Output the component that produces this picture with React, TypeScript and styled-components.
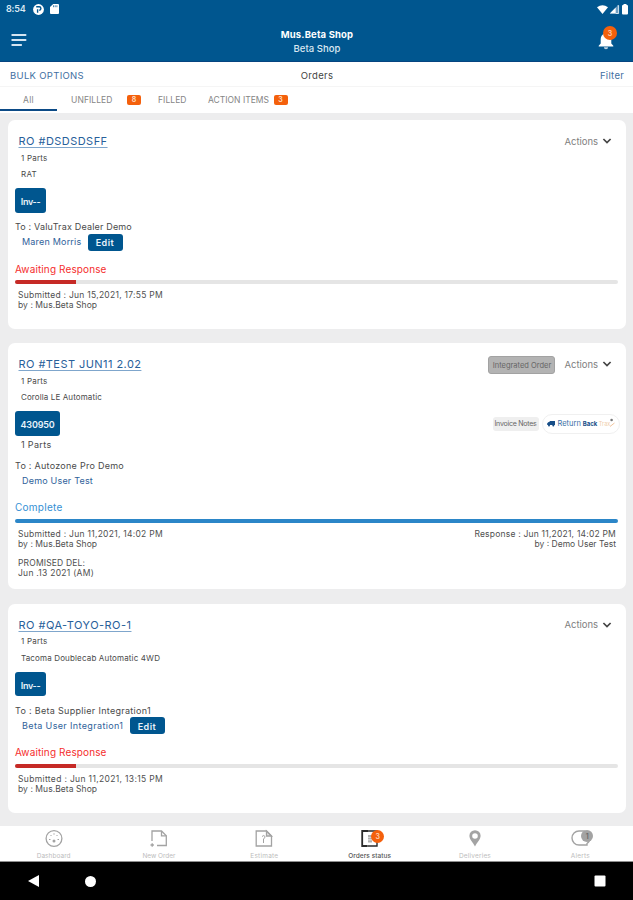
import React from 'react';
import styled, { createGlobalStyle, css } from 'styled-components';

const GlobalStyle = createGlobalStyle`
  *, *::before, *::after { box-sizing: border-box; }
  html, body { margin: 0; padding: 0; background: #ededee; }
  body { font-family: Inter, "Liberation Sans", sans-serif; overflow: hidden; }
`;

const brand = '#00568f';
const orange = '#f4600c';

const tracking = css<{ $ls?: number }>`
  letter-spacing: ${({ $ls = 0 }) => $ls}px;
  white-space: nowrap;
`;

const Screen = styled.div`
  width: 633px;
  height: 900px;
  display: flex;
  flex-direction: column;
  background: #ededee;
  overflow: hidden;
`;

const Header = styled.header`
  height: 62px;
  flex: none;
  background: ${brand};
  border-bottom: 1px solid #064480;
  color: #fff;
`;

const StatusBar = styled.div`
  height: 18px;
  display: flex;
  align-items: center;
  padding: 0 4px 0 6px;
`;

const Clock = styled.span`
  ${tracking}
  width: 28px;
  font-size: 9px;
  font-weight: 600;
  line-height: 18px;
  color: #d9e8f3;
`;

const StatusIcons = styled.div<{ $end?: boolean }>`
  display: flex;
  align-items: center;
  gap: ${({ $end }) => ($end ? 1 : 6)}px;
  margin-left: ${({ $end }) => ($end ? 'auto' : '-1px')};
  svg { display: block; }
`;

const TitleBar = styled.div`
  height: 43px;
  display: grid;
  grid-template-columns: 100px 1fr 100px;
  align-items: center;
  padding: 0 18px 0 11px;
  svg { display: block; }
`;

const Titles = styled.div`
  display: flex;
  flex-direction: column;
  align-items: center;
  padding: 4px 0 0 8px;
`;

const ShopName = styled.h1`
  ${tracking}
  margin: 0;
  font-size: 9.5px;
  font-weight: 700;
  line-height: 14px;
`;

const BranchName = styled.div`
  ${tracking}
  font-size: 9.5px;
  font-weight: 500;
  line-height: 14px;
  color: #dbe8f2;
`;

const BellButton = styled.div`
  position: relative;
  justify-self: end;
  width: 17px;
  height: 21px;
`;

const CountBubble = styled.span<{ $muted?: boolean; $top: number; $left: number; $size: number }>`
  position: absolute;
  top: ${({ $top }) => $top}px;
  left: ${({ $left }) => $left}px;
  width: ${({ $size }) => $size}px;
  height: ${({ $size }) => $size}px;
  border-radius: 50%;
  display: flex;
  align-items: center;
  justify-content: center;
  background: ${({ $muted }) => ($muted ? '#a3a3a3' : orange)};
  color: ${({ $muted }) => ($muted ? '#686868' : '#ffd3b5')};
  font-size: 7px;
  font-weight: 600;
  line-height: 1;
`;

const OptionsBar = styled.div`
  height: 25px;
  flex: none;
  display: grid;
  grid-template-columns: 1fr auto 1fr;
  align-items: center;
  padding: 4px 9px 0 10px;
  background: #fff;
  border-bottom: 1px solid #f5f5f5;
`;

const Option = styled.span<{ $kind?: 'link' | 'title' | 'end'; $ls?: number }>`
  ${tracking}
  font-size: 9.5px;
  line-height: 14px;
  color: ${({ $kind }) => ($kind === 'title' ? '#444' : '#3f70a2')};
  justify-self: ${({ $kind }) => ($kind === 'end' ? 'end' : 'start')};
`;

const Tabs = styled.nav`
  height: 26px;
  flex: none;
  display: flex;
  background: #fff;
`;

const Spacer = styled.span<{ $width: number }>`
  width: ${({ $width }) => $width}px;
`;

const Tab = styled.div<{ $width: number; $active?: boolean; $ls?: number }>`
  ${tracking}
  width: ${({ $width }) => $width}px;
  height: 24px;
  display: flex;
  align-items: center;
  justify-content: ${({ $active }) => ($active ? 'center' : 'flex-start')};
  border-bottom: 2px solid ${({ $active }) => ($active ? '#0b4a86' : 'transparent')};
  padding-top: 4px;
  font-size: 8.5px;
  color: #858585;
`;

const TabCount = styled.span`
  width: 14px;
  height: 10px;
  margin-left: auto;
  border-radius: 2px;
  background: ${orange};
  color: #ffe0cb;
  font-size: 7px;
  font-weight: 600;
  line-height: 10px;
  text-align: center;
  letter-spacing: 0;
`;

const Orders = styled.main`
  flex: 1;
  min-height: 0;
  display: flex;
  flex-direction: column;
  gap: 14.5px;
  padding: 7px 7px 0 8px;
`;

const Card = styled.article<{ $height: number }>`
  height: ${({ $height }) => $height}px;
  flex: none;
  display: flex;
  flex-direction: column;
  padding: 13.5px 8px 0 7px;
  border-radius: 7px;
  background: #fff;
`;

const CardRow = styled.div<{ $height: number; $indent?: number; $top?: number }>`
  height: ${({ $height }) => $height}px;
  margin-top: ${({ $top = 0 }) => $top}px;
  padding-left: ${({ $indent = 0 }) => $indent}px;
  flex: none;
  display: flex;
  align-items: center;
`;

const OrderLink = styled.a`
  ${tracking}
  font-size: 11px;
  line-height: 15px;
  color: #28609a;
  text-decoration: underline;
  text-decoration-color: #7fa6cc;
  text-underline-offset: 2px;
`;

const Detail = styled.span<{ $size?: number; $ls?: number }>`
  ${tracking}
  font-size: ${({ $size = 8 }) => $size}px;
  line-height: 12px;
  color: #4a4a4a;
`;

const Person = styled.span`
  ${tracking}
  font-size: 9px;
  line-height: 12px;
  color: #2f629a;
`;

const InvoiceButton = styled.button<{ $width: number; $ls?: number }>`
  ${tracking}
  width: ${({ $width }) => $width}px;
  height: 24.5px;
  padding: 2px 0 0;
  border: 0;
  border-radius: 3px;
  background: ${brand};
  color: #e8f2fa;
  font: 600 9px Inter, sans-serif;
`;

const EditButton = styled.button`
  ${tracking}
  width: 35px;
  height: 17px;
  margin-left: 7px;
  padding: 1px 2px 0 0;
  border: 0;
  border-radius: 3px;
  background: ${brand};
  color: #e8f2fa;
  font: 600 9px Inter, sans-serif;
`;

const RowEnd = styled.div<{ $gap: number; $right?: number }>`
  margin-left: auto;
  margin-right: ${({ $right = 0 }) => $right}px;
  display: flex;
  align-items: center;
  gap: ${({ $gap }) => $gap}px;
`;

const ActionsButton = styled.div`
  ${tracking}
  display: flex;
  align-items: center;
  gap: 4px;
  font-size: 9.5px;
  line-height: 14px;
  color: #808080;
  svg { display: block; }
`;

const IntegratedTag = styled.span`
  ${tracking}
  width: 67px;
  height: 18px;
  border: 1px solid #a2a2a2;
  border-radius: 3px;
  background: #b3b3b3;
  color: #666;
  font-size: 7.5px;
  line-height: 18px;
  text-align: center;
`;

const NotesTag = styled.span`
  ${tracking}
  width: 46px;
  height: 14px;
  border-radius: 3px;
  background: #efefef;
  color: #666;
  font-size: 7px;
  line-height: 14px;
  text-align: center;
`;

const ReturnPill = styled.span`
  width: 78px;
  height: 20px;
  display: flex;
  align-items: center;
  padding-left: 4px;
  border: 1px solid #f0f0f0;
  border-radius: 10px;
  background: #fff;
  svg { display: block; flex: none; }
`;

const ReturnWord = styled.span<{ $tone: 'blue' | 'bold' | 'gold' }>`
  margin-left: ${({ $tone }) => ({ blue: 3, bold: 2, gold: 1.5 })[$tone]}px;
  color: ${({ $tone }) => ({ blue: '#3a70a8', bold: '#174e88', gold: '#f0cda8' })[$tone]};
  font-size: ${({ $tone }) => ({ blue: 7.5, bold: 6, gold: 5.5 })[$tone]}px;
  font-weight: ${({ $tone }) => ($tone === 'bold' ? 700 : 400)};
  line-height: 12px;
`;

const Status = styled.div<{ $done?: boolean; $ls?: number }>`
  ${tracking}
  height: 15px;
  margin-top: 11px;
  flex: none;
  font-size: 10px;
  line-height: 15px;
  color: ${({ $done }) => ($done ? '#3590d4' : '#f52d2d')};
`;

const Track = styled.div`
  height: 4px;
  margin-top: 3.5px;
  flex: none;
  border-radius: 2px;
  background: #e5e5e5;
  overflow: hidden;
`;

const Progress = styled.div<{ $done?: boolean }>`
  width: ${({ $done }) => ($done ? '100%' : '61px')};
  height: 4px;
  background: ${({ $done }) => ($done ? '#2b86c8' : '#c62a26')};
`;

const Stamps = styled.div`
  display: flex;
  justify-content: space-between;
  margin-top: 6px;
  padding: 0 2px 0 3px;
`;

const Stamp = styled.div<{ $end?: boolean }>`
  display: flex;
  flex-direction: column;
  align-items: ${({ $end }) => ($end ? 'flex-end' : 'flex-start')};
`;

const StampLine = styled.span<{ $ls?: number; $gapAbove?: boolean }>`
  ${tracking}
  margin-top: ${({ $gapAbove }) => ($gapAbove ? 8.5 : 0)}px;
  font-size: 8.5px;
  line-height: 10.4px;
  color: #4f4f4f;
`;

const BottomNav = styled.nav`
  height: 36px;
  flex: none;
  display: grid;
  grid-template-columns: repeat(6, 1fr);
  padding-left: 1px;
  background: #fff;
  border-bottom: 1px solid #8f8f8f;
`;

const NavItem = styled.div<{ $active?: boolean }>`
  display: flex;
  flex-direction: column;
  align-items: center;
  padding-top: 3px;
  color: ${({ $active }) => ($active ? '#2b2b2b' : '#a3a3a3')};
`;

const NavIcon = styled.div`
  position: relative;
  width: 20px;
  height: 20px;
  svg { display: block; }
`;

const NavLabel = styled.span<{ $active?: boolean; $ls?: number }>`
  ${tracking}
  margin-top: 3px;
  font-size: 6.5px;
  font-weight: ${({ $active }) => ($active ? 500 : 400)};
  line-height: 9px;
  color: ${({ $active }) => ($active ? '#555' : '#bdbdbd')};
`;

const SystemBar = styled.footer`
  height: 38px;
  flex: none;
  display: flex;
  align-items: center;
  padding: 0 27px 0 28px;
  background: #000;
  svg { display: block; }
`;

const BackKey = styled.svg`margin-right: 45px;`;
const RecentKey = styled.svg`margin-left: auto;`;

const Actions = () => (
  <ActionsButton $ls={-0.03}>
    <span>Actions</span>
    <svg width="10" height="7" viewBox="0 0 10 7" fill="none" stroke="#444" strokeWidth="1.7">
      <path d="M1.4 1 5 4.600 8.600 1" />
    </svg>
  </ActionsButton>
);

type Order = {
  height: number;
  ro: [string, number];
  vehicle: [string, number];
  invoice: [string, number, number];
  supplier: [string, number];
  person: [string, number];
  submitted: [string, number];
  complete?: boolean;
};

const orders: Order[] = [
  {
    height: 208.5,
    ro: ['RO #DSDSDSFF', 0.46],
    vehicle: ['RAT', 0.28],
    invoice: ['Inv--', 31, -0.33],
    supplier: ['To : ValuTrax Dealer Demo', 0.18],
    person: ['Maren Morris', 0.2],
    submitted: ['Submitted : Jun 15,2021, 17:55 PM', 0.26],
  },
  {
    height: 246,
    ro: ['RO #TEST JUN11 2.02', 0.44],
    vehicle: ['Corolla LE Automatic', 0.11],
    invoice: ['430950', 45, -0.17],
    supplier: ['To : Autozone Pro Demo', 0.27],
    person: ['Demo User Test', 0.2],
    submitted: ['Submitted : Jun 11,2021, 14:02 PM', 0.27],
    complete: true,
  },
  {
    height: 209,
    ro: ['RO #QA-TOYO-RO-1', 0.47],
    vehicle: ['Tacoma Doublecab Automatic 4WD', 0.15],
    invoice: ['Inv--', 31, -0.33],
    supplier: ['To : Beta Supplier Integration1', 0.31],
    person: ['Beta User Integration1', 0.37],
    submitted: ['Submitted : Jun 11,2021, 13:15 PM', 0.34],
  },
];

const OrderCard = ({ order }: { order: Order }) => (
  <Card $height={order.height}>
    <CardRow $height={16} $indent={3.5}>
      <OrderLink $ls={order.ro[1]}>{order.ro[0]}</OrderLink>
      <RowEnd $gap={9} $right={6}>
        {order.complete && <IntegratedTag $ls={0}>Integrated Order</IntegratedTag>}
        <Actions />
      </RowEnd>
    </CardRow>
    <CardRow $height={12} $top={2} $indent={6}>
      <Detail $ls={0.21}>1 Parts</Detail>
    </CardRow>
    <CardRow $height={12} $top={4.5} $indent={6}>
      <Detail $ls={order.vehicle[1]}>{order.vehicle[0]}</Detail>
    </CardRow>
    <CardRow $height={25} $top={8}>
      <InvoiceButton $width={order.invoice[1]} $ls={order.invoice[2]}>{order.invoice[0]}</InvoiceButton>
      {order.complete && (
        <RowEnd $gap={3} $right={-1.5}>
          <NotesTag $ls={-0.24}>Invoice Notes</NotesTag>
          <ReturnPill>
            <svg width="8" height="7" viewBox="0 0 8 7" fill="#174e88">
              <path d="M2.600 1H8v4H.2V3.200L1.600 2h1z" />
              <circle cx="2" cy="5.400" r="1" />
              <circle cx="6.300" cy="5.400" r="1" />
            </svg>
            <ReturnWord $tone="blue">Return</ReturnWord>
            <ReturnWord $tone="bold">Back</ReturnWord>
            <ReturnWord $tone="gold">Trax</ReturnWord>
            <svg width="5" height="14" viewBox="0 0 5 14">
              <path d="M0 9.500 4.500 6" stroke="#f0c49c" />
              <circle cx="1.600" cy="3" r="1.300" fill="#777" />
            </svg>
          </ReturnPill>
        </RowEnd>
      )}
    </CardRow>
    {order.complete && (
      <CardRow $height={12} $top={3} $indent={6}>
        <Detail $size={9} $ls={0.34}>1 Parts</Detail>
      </CardRow>
    )}
    <CardRow $height={12} $top={order.complete ? 8.5 : 8}>
      <Detail $size={9} $ls={order.supplier[1]}>{order.supplier[0]}</Detail>
    </CardRow>
    <CardRow $height={17} $top={0.5} $indent={7}>
      <Person $ls={order.person[1]}>{order.person[0]}</Person>
      {!order.complete && <EditButton $ls={0.48}>Edit</EditButton>}
    </CardRow>
    <Status $done={order.complete} $ls={order.complete ? 0.26 : 0.12}>
      {order.complete ? 'Complete' : 'Awaiting Response'}
    </Status>
    <Track><Progress $done={order.complete} /></Track>
    <Stamps>
      <Stamp>
        <StampLine $ls={order.submitted[1]}>{order.submitted[0]}</StampLine>
        <StampLine $ls={0.06}>by : Mus.Beta Shop</StampLine>
        {order.complete && (
          <>
            <StampLine $gapAbove $ls={0.16}>PROMISED DEL:</StampLine>
            <StampLine $ls={0.27}>Jun .13 2021 (AM)</StampLine>
          </>
        )}
      </Stamp>
      {order.complete && (
        <Stamp $end>
          <StampLine $ls={0.21}>Response : Jun 11,2021, 14:02 PM</StampLine>
          <StampLine $ls={0}>by : Demo User Test</StampLine>
        </Stamp>
      )}
    </Stamps>
  </Card>
);

export default function App() {
  return (
    <>
      <GlobalStyle />
      <Screen>
        <Header>
          <StatusBar>
            <Clock $ls={-0.2}>8:54</Clock>
            <StatusIcons>
              <svg width="11" height="11" viewBox="0 0 11 11">
                <circle cx="5.500" cy="5.500" r="5.400" fill="#fff" />
                <path d="M4.600 8.800V5.200M3.200 2.800h3a1.700 1.700 0 0 1 0 3.400" fill="none" stroke={brand} strokeWidth="1.400" />
              </svg>
              <svg width="9" height="10" viewBox="0 0 9 10">
                <path d="M3.200 0H8a1 1 0 0 1 1 1v8a1 1 0 0 1-1 1H1a1 1 0 0 1-1-1V3z" fill="#fff" />
                <path d="M3.500 1.300v1.900M5.200 1.300v1.900M6.900 1.300v1.900" stroke={brand} strokeWidth=".7" />
              </svg>
            </StatusIcons>
            <StatusIcons $end>
              <svg width="11" height="9" viewBox="0 0 11 9"><path d="M0 2.300Q5.500-1.800 11 2.300L5.500 9z" fill="#fff" /></svg>
              <svg width="11" height="10" viewBox="0 0 11 10">
                <path d="M.8 9.500 9.500.8v8.700z" fill="#6f9fc4" />
                <path d="M.8 9.500 6.700 3.600v5.900z" fill="#fff" />
                <path d="M8.700 1.600h.9v7.900h-3" fill="none" stroke="#fff" strokeWidth=".8" />
              </svg>
              <svg width="8" height="11" viewBox="0 0 8 11"><path d="M2.500 0h3v1H6a1 1 0 0 1 1 1v7.500a1 1 0 0 1-1 1H2a1 1 0 0 1-1-1V2a1 1 0 0 1 1-1h.5z" fill="#fff" /></svg>
            </StatusIcons>
          </StatusBar>
          <TitleBar>
            <svg width="16" height="14" viewBox="0 0 16 14" stroke="#d5e5f1" strokeWidth="1.800" strokeLinecap="round">
              <path d="M1.200 2h13.400M1.200 7h13.400M1.200 12h9" />
            </svg>
            <Titles>
              <ShopName $ls={0.16}>Mus.Beta Shop</ShopName>
              <BranchName $ls={0.06}>Beta Shop</BranchName>
            </Titles>
            <BellButton>
              <svg width="17" height="21" viewBox="0 0 17 21" fill="#fff">
                <path d="M8 3.200c.9 0 1.500.6 1.500 1.500C12 5.500 13.300 7.600 13.300 10.200v4.300l2 2.300v.7H.7v-.7l2-2.300v-4.300c0-2.600 1.300-4.700 3.800-5.500 0-.9.600-1.500 1.500-1.500z" />
                <path d="M5.900 18.200h4.200a2.100 2.100 0 0 1-4.200 0z" fillOpacity=".75" />
              </svg>
              <CountBubble $top={-3} $left={5} $size={14}>3</CountBubble>
            </BellButton>
          </TitleBar>
        </Header>
        <OptionsBar>
          <Option $kind="link" $ls={0.31}>BULK OPTIONS</Option>
          <Option $kind="title" $ls={0.31}>Orders</Option>
          <Option $kind="end" $ls={0.25}>Filter</Option>
        </OptionsBar>
        <Tabs>
          <Tab $width={57} $active $ls={0.34}>All</Tab>
          <Spacer $width={14} />
          <Tab $width={70} $ls={0.08}>UNFILLED<TabCount>8</TabCount></Tab>
          <Spacer $width={17} />
          <Tab $width={50} $ls={0.06}>FILLED</Tab>
          <Tab $width={79.5} $ls={0.01}>ACTION ITEMS<TabCount>3</TabCount></Tab>
        </Tabs>
        <Orders>
          {orders.map((order) => <OrderCard key={order.ro[0]} order={order} />)}
        </Orders>
        <BottomNav>
          <NavItem>
            <NavIcon>
              <svg width="20" height="20" viewBox="0 0 20 20" fill="none" stroke="currentColor">
                <circle cx="10" cy="9.500" r="7.900" strokeWidth="1.300" />
                <path d="M5 10.500h1.500M13.500 10.500H15M6.500 6l1 1M13.500 6l-1 1M10 4.300v1.400" />
                <circle cx="10" cy="12" r="1.500" fill="currentColor" stroke="none" />
              </svg>
            </NavIcon>
            <NavLabel $ls={0.05}>Dashboard</NavLabel>
          </NavItem>
          <NavItem>
            <NavIcon>
              <svg width="20" height="20" viewBox="0 0 20 20" fill="none" stroke="currentColor" strokeWidth="1.300">
                <path d="M3 12V2h9.500l4.800 4.800V16.500H8" />
                <path d="M12.500 2v4.800h4.800" />
                <path d="M1.500 16h3.400M3.200 14.300v3.400" />
              </svg>
            </NavIcon>
            <NavLabel $ls={-0.03}>New Order</NavLabel>
          </NavItem>
          <NavItem>
            <NavIcon>
              <svg width="20" height="20" viewBox="0 0 20 20" fill="none" stroke="currentColor" strokeWidth="1.300">
                <path d="M2.200 2h10.300l5 5v10H2.200z" />
                <path d="M12.500 2v5h5z" fill="currentColor" fillOpacity=".3" />
                <path d="M8 7.500q2-2 3 0 0 1.500-1.500 2.500v4" strokeWidth="1" />
              </svg>
            </NavIcon>
            <NavLabel $ls={0.22}>Estimate</NavLabel>
          </NavItem>
          <NavItem $active>
            <NavIcon>
              <svg width="20" height="20" viewBox="0 0 20 20" fill="none" stroke="currentColor" strokeWidth="1.800">
                <path d="M8 2H2.200v15h5" />
                <path d="M8 2h9v15H7.200" strokeWidth="1.400" />
                <path d="M9 6v8M11 6v8" stroke="#888" strokeWidth="1.300" strokeDasharray="2 .6" />
              </svg>
              <CountBubble $top={1} $left={11.5} $size={13}>3</CountBubble>
            </NavIcon>
            <NavLabel $active $ls={0.08}>Orders status</NavLabel>
          </NavItem>
          <NavItem>
            <NavIcon>
              <svg width="20" height="20" viewBox="0 0 20 20">
                <path fillRule="evenodd" d="M10 1.200a5.600 5.600 0 0 1 5.600 5.600C15.600 10.500 12 13.500 10 17.500 8 13.500 4.400 10.500 4.400 6.800A5.600 5.600 0 0 1 10 1.200zm0 3a2.800 2.800 0 1 0 0 5.600 2.800 2.800 0 0 0 0-5.600z" fill="currentColor" />
              </svg>
            </NavIcon>
            <NavLabel $ls={0.17}>Deliveries</NavLabel>
          </NavItem>
          <NavItem>
            <NavIcon>
              <svg width="20" height="20" viewBox="0 0 20 20" fill="none" stroke="currentColor" strokeWidth="1.400">
                <path d="M9 2h5a7 7 0 0 1 3 12.500V16H9A7 7 0 0 1 9 2z" />
              </svg>
              <CountBubble $muted $top={1} $left={11} $size={12}>1</CountBubble>
            </NavIcon>
            <NavLabel $ls={0.18}>Alerts</NavLabel>
          </NavItem>
        </BottomNav>
        <SystemBar>
          <BackKey width="12" height="12" viewBox="0 0 12 12"><path d="M0 6 11 0v12z" fill="#fff" /></BackKey>
          <svg width="11" height="11" viewBox="0 0 11 11"><circle cx="5.500" cy="5.500" r="5.500" fill="#fff" /></svg>
          <RecentKey width="12" height="12" viewBox="0 0 12 12"><rect x=".5" y=".5" width="11" height="11" rx="1" fill="#fff" /></RecentKey>
        </SystemBar>
      </Screen>
    </>
  );
}
